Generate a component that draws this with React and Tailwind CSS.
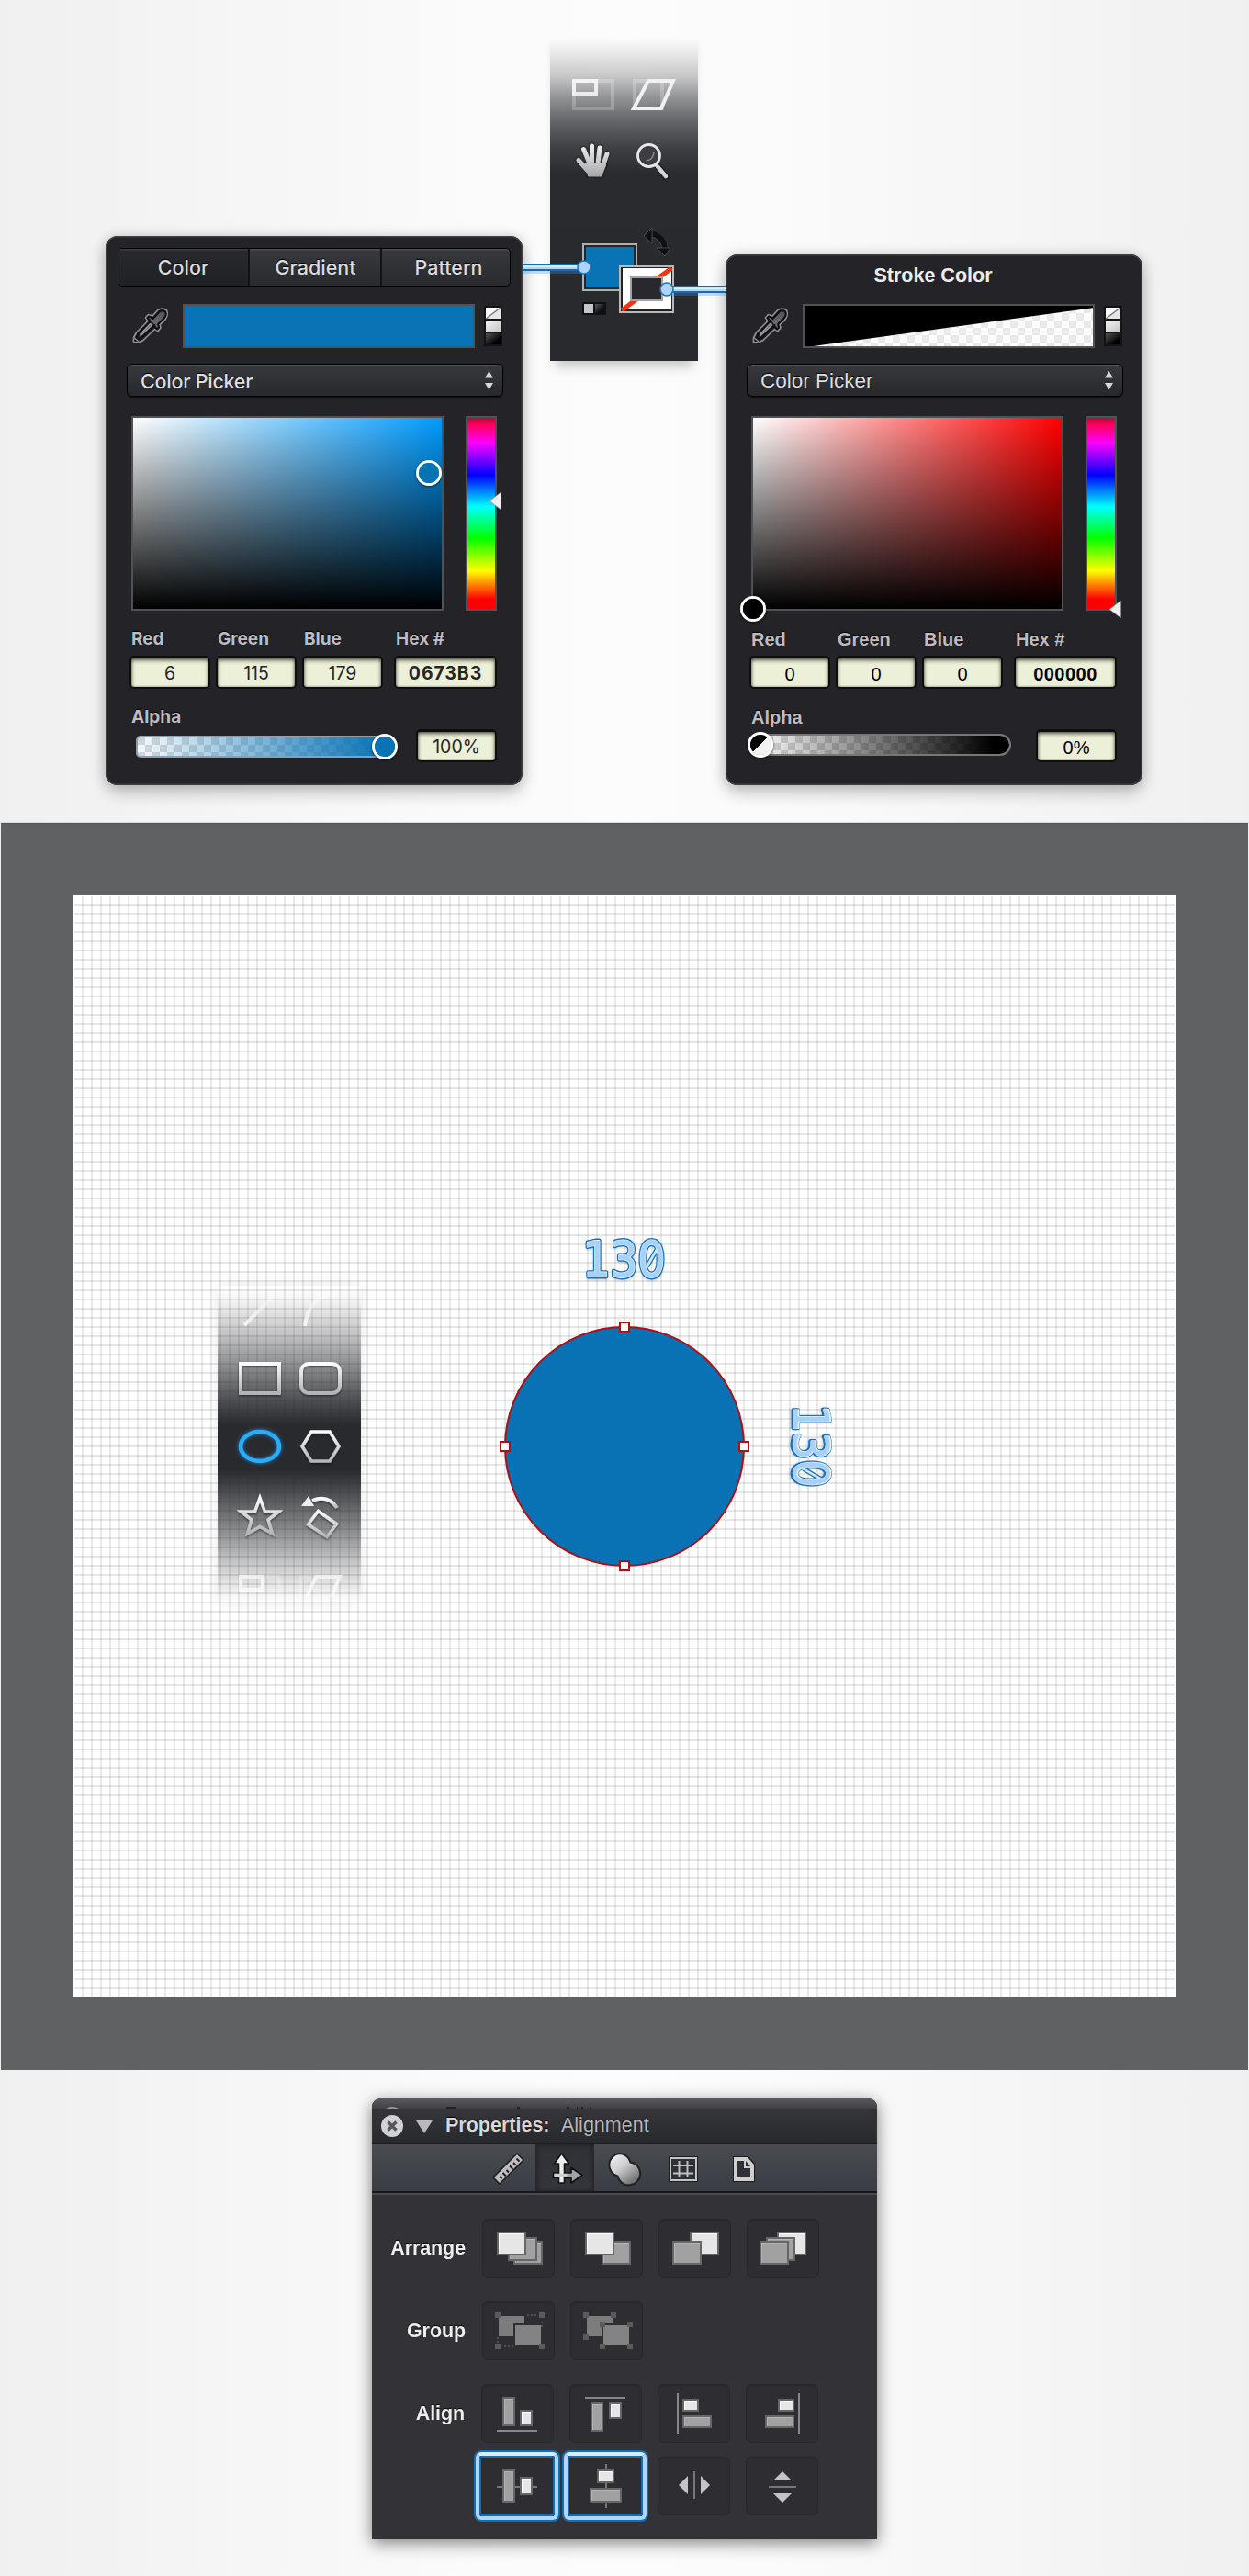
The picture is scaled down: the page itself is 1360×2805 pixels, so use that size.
import React from "react";

function Connector({ flip, reach }) {
  return (
    <svg width={reach + 11} height="24" viewBox={`0 0 ${reach + 11} 24`} className="block overflow-visible">
      <g transform={flip ? `translate(${reach + 11} 0) scale(-1 1)` : undefined}>
        <rect x="0" y="15" width={reach} height="4" fill="#3f9ae0" opacity="0.3" />
        <rect x="0" y="8" width={reach} height="8" fill="#0f6db0" />
        <rect x="0" y="10" width={reach} height="4" fill="#b5d5fb" />
        <rect x="0" y="10" width={reach} height="2" fill="#d9ecff" />
        <circle cx={reach} cy="12" r="7" fill="#b1d2fb" stroke="#1a78be" strokeWidth="1.6" />
      </g>
    </svg>
  );
}

function Eyedropper() {
  return (
    <svg width="40" height="40" viewBox="0 0 40 40" className="block">
      <defs>
        <linearGradient id="bulb" x1="0" y1="0" x2="0" y2="1">
          <stop offset="0" stopColor="#505054" />
          <stop offset="1" stopColor="#77777b" />
        </linearGradient>
      </defs>
      <g strokeLinejoin="round" strokeLinecap="round">
        <path d="M1.500 37.500V33L4.500 27 17 14.500 14.500 11 17.500 7.500 22 9 28 2.500Q33-.5 37.500 3 39.500 8 36 13L30 18.500 31 22 28 25.500 24.500 23.500 12 35.500 7 38Z" fill="#242428" stroke="#8e8e93" strokeWidth="1.700" />
        <path d="M16.500 11 18.500 9.500 22.500 12 29.500 4.500Q33 2 36 4.500 38 8 34.500 11.500L28 18 29 21.500 27 23.500Z" fill="url(#bulb)" stroke="#0f0f12" strokeWidth="2" />
        <path d="M20 15 6.500 28.500 3.500 35.500 10.500 32.500 24.500 19" fill="#2b2b2f" stroke="#0e0e11" strokeWidth="2" />
        <path d="M19.500 17.500 9 28.500V30.500L21.500 19Z" fill="#606066" stroke="#9c9ca0" strokeWidth="1.300" />
        <path d="M3 33.500 6.500 36.500" stroke="#9a9a9e" strokeWidth="1.200" />
      </g>
    </svg>
  );
}

function SwatchStack() {
  return (
    <svg width="20" height="44" viewBox="0 0 20 44" className="block">
      <defs>
        <linearGradient id="stackBlack" x1="0" y1="0" x2="1" y2="1">
          <stop offset="0" stopColor="#555" />
          <stop offset="0.75" stopColor="#000" />
        </linearGradient>
        <linearGradient id="stackWhite" x1="0" y1="0" x2="1" y2="1">
          <stop offset="0" stopColor="#f3f3f3" />
          <stop offset="1" stopColor="#c6c6c8" />
        </linearGradient>
      </defs>
      <rect x="0" y="0" width="20" height="44" fill="#141416" />
      <rect x="2" y="2" width="16" height="12" fill="#fff" />
      <path d="M2 14 18 2V14Z" fill="#e6e6e6" />
      <path d="M2 14 18 2" stroke="#777" strokeWidth="1.500" />
      <rect x="2" y="16" width="16" height="12" fill="url(#stackWhite)" />
      <rect x="2" y="30" width="16" height="12" fill="url(#stackBlack)" />
    </svg>
  );
}

function Knob({ children }) {
  return (
    <div className="h-7 w-7 overflow-hidden rounded-full border-[3px] border-white shadow-[0_1px_3px_rgba(0,0,0,.6)]">{children}</div>
  );
}

function Field({ label, value, width, bold, tone }) {
  return (
    <div>
      {label}
      <div
        className={
          "flex h-[36px] items-center justify-center rounded-[5px] border-2 border-t-[3px] border-[#0e0e0f] bg-[#ecf0d9] pt-[3px] shadow-[inset_0_2px_4px_rgba(40,40,20,.75),inset_0_0_2px_rgba(60,60,40,.6)] " +
          width + " " + tone + " " +
          (bold ? "font-bold" : "font-normal")
        }
      >
        {value}
      </div>
    </div>
  );
}

function Pointer() {
  return <svg width="13" height="19" viewBox="0 0 13 19"><path d="M0 9.500 12.500 0V19Z" fill="#f0f0f0" stroke="#888" strokeWidth=".6" /></svg>;
}

function ColorPanel({ header, font, ink, swatch, field, knobPicker, pointer, values, hex, alpha, slider, cls, sizes }) {
  const label = (t) => (
    <div className={"h-[33px] pl-[2px] pt-px font-bold leading-[28px] text-[#bcbcc2] [text-shadow:0_-1px_1px_#000] " + sizes.label}>{t}</div>
  );
  return (
    <div className={"w-[454px] rounded-[13px] bg-[#242428] shadow-[inset_0_0_0_1.5px_#404044,0_8px_18px_rgba(0,0,0,.22),0_0_14px_rgba(0,0,0,.14)] " + font + " " + cls}>
      {header}
      <div className="flex h-12">
        <div className="ml-[29px] mt-1 w-[55px]"><Eyedropper /></div>
        <div className="h-12 w-[318px] border-2 border-[#515256]">{swatch}</div>
        <div className="ml-[10px] mt-[2px]"><SwatchStack /></div>
      </div>
      <div className="ml-[23px] mt-[17px] flex h-9 w-[410px] items-center justify-between rounded-md border border-black bg-[linear-gradient(#38393d,#27282c)] pl-[14px] pr-[10px] shadow-[inset_0_1.5px_0_#505155,0_1px_1px_#101012]">
        <span className={"pt-[2px] text-[#dfdfe0] [text-shadow:0_-1px_1px_#000] " + sizes.select}>Color Picker</span>
        <svg width="9" height="22" viewBox="0 0 9 22" fill="#d6d6d8"><path d="M0 8.500 4.500 1 9 8.500ZM0 14H9L4.500 21.500Z" /></svg>
      </div>
      <div className="relative ml-[28px] mt-[21px] flex h-[212px] gap-6">
        <div className={"h-[212px] w-[340px] border-2 border-[#505155] " + field} />
        <div className="h-[212px] w-[34px] border-2 border-[#505155] bg-[linear-gradient(180deg,#c4003a_0%,#ff0062_4%,#ff00ff_13%,#0000ff_30%,#00ffff_46.5%,#00ff00_63%,#ffff00_80%,#ff0000_95%,#ff0000_100%)]" />
        {knobPicker}
        {pointer}
      </div>
      <div className={"ml-[26px] mt-[16px] flex " + sizes.value}>
        <Field label={label("Red")} value={values[0]} width="w-[88px]" tone={ink} />
        <div className="w-[6px]" />
        <Field label={label("Green")} value={values[1]} width="w-[88px]" tone={ink} />
        <div className="w-[6px]" />
        <Field label={label("Blue")} value={values[2]} width="w-[88px]" tone={ink} />
        <div className="w-[12px]" />
        <Field label={label("Hex #")} value={hex} width={"w-[112px] " + sizes.hex} bold tone={ink} />
      </div>
      <div className="ml-[26px] mt-[16px] h-[28px]">{label("Alpha")}</div>
      <div className={"relative flex h-9 " + sizes.value}>
        {slider}
        <div className="ml-auto mr-[28px]"><Field value={alpha} width="w-[88px]" tone={ink} /></div>
      </div>
    </div>
  );
}

function HandGlyph() {
  const fingers = "M630 174.500 640 186M635.500 162.500 642 178M644.500 159V178M653 161 651 178M661 167.500 656 182";
  return (
    <g strokeLinecap="round" strokeLinejoin="round">
      <path d={fingers} fill="none" stroke="#2c2c30" strokeOpacity=".8" strokeWidth="8" />
      <path d="M637 178H658L660 180 655 192H640Z" fill="#222226" stroke="#222226" strokeWidth="4" />
      <path d={fingers} fill="none" stroke="url(#handTone)" strokeWidth="5" />
      <path d="M638 178H657L659 180 654.500 191.500H641Z" fill="url(#handTone)" stroke="url(#handTone)" strokeWidth="2" />
    </g>
  );
}

function ToolStripTop() {
  return (
    <div className="h-[363px] w-[161px] bg-[linear-gradient(180deg,rgba(43,44,48,0)_3%,rgba(43,44,48,.08)_7%,rgba(43,44,48,.25)_14.5%,rgba(43,44,48,.5)_21%,rgba(43,44,48,.72)_28%,rgba(43,44,48,.9)_36%,#2a2b2f_44%,#292a2e_100%)] shadow-[0_12px_12px_-6px_rgba(0,0,0,.22)]">
      <svg width="161" height="363" viewBox="599 30 161 363" className="block">
        <defs>
          <linearGradient id="handTone" gradientUnits="userSpaceOnUse" x1="0" y1="157" x2="0" y2="193">
            <stop offset="0" stopColor="#f0f0f0" />
            <stop offset="1" stopColor="#a6a6a9" />
          </linearGradient>
          <linearGradient id="chip" x1="0" y1="0" x2="1" y2="1">
            <stop offset="0" stopColor="#5a5a5c" />
            <stop offset=".7" stopColor="#0c0c0c" />
          </linearGradient>
        </defs>
        <g fill="none">
          <rect x="625" y="88" width="42" height="30" stroke="#fff" strokeOpacity=".22" strokeWidth="4" />
          <rect x="625" y="88" width="24" height="14" stroke="#fff" strokeOpacity=".8" strokeWidth="4" />
          <rect x="691" y="88" width="30" height="30" stroke="#fff" strokeOpacity=".22" strokeWidth="4" />
          <path d="M706 88H733L720 118H690Z" stroke="#f1f1f1" strokeWidth="4" />
        </g>
        <HandGlyph />
        <g fill="none" strokeLinecap="round">
          <path d="M715 180 725 192" stroke="#19191b" strokeWidth="7" />
          <path d="M714 179 725 192" stroke="#d4d4d4" strokeWidth="4.500" />
          <circle cx="706.500" cy="169.500" r="12" fill="#3d3d42" stroke="#e8e8e8" strokeWidth="2.800" />
          <path d="M712 166Q711 174 704 175" stroke="#85858a" strokeWidth="1.600" />
        </g>
        <path d="M711 255Q723 260 724 270" fill="none" stroke="#55565a" strokeWidth="7" />
        <path d="M709 254Q723 258 724 270" fill="none" stroke="#101012" strokeWidth="6" />
        <path d="M701 257 710 248V265ZM715 270H730L724 279Z" fill="#101012" stroke="#56575b" strokeWidth=".8" />
        <rect x="635" y="266" width="58" height="50" fill="#0873b5" stroke="#aeb0b3" strokeWidth="2" />
        <rect x="637" y="268" width="54" height="46" fill="none" stroke="#25262a" strokeWidth="2" />
        <rect x="674" y="289" width="60" height="52" fill="#222226" />
        <rect x="678" y="292" width="53" height="45" fill="#fff" />
        <path d="M677 338 693 326M716 303 731.500 292" stroke="#f6330e" strokeWidth="5" />
        <rect x="675" y="290" width="58" height="50" fill="none" stroke="#b8b9bb" strokeWidth="2" />
        <rect x="687" y="302" width="34" height="25" fill="#29292d" stroke="#a2a3a6" strokeWidth="2" />
        <rect x="634" y="329" width="26" height="14" fill="#111113" />
        <rect x="636" y="331" width="10" height="10" fill="#c6c6c8" />
        <rect x="648" y="331" width="10" height="10" fill="url(#chip)" />
      </svg>
    </div>
  );
}

function ShapeStrip() {
  return (
    <div className="h-[345px] w-[156px] bg-[linear-gradient(180deg,rgba(42,43,47,0)_1%,rgba(42,43,47,.06)_5%,rgba(42,43,47,.28)_15%,rgba(42,43,47,.58)_27%,rgba(42,43,47,.85)_37%,#292a2e_44%,#292a2e_58%,rgba(42,43,47,.87)_64%,rgba(42,43,47,.6)_75%,rgba(42,43,47,.28)_87%,rgba(42,43,47,.06)_97%,rgba(42,43,47,0)_100%)] shadow-[0_0_14px_-2px_rgba(0,0,0,.12)]">
      <svg width="156" height="345" viewBox="237 1400 156 345" className="block">
        <defs>
          <linearGradient id="silver2" x1="0" y1="0" x2="0" y2="1">
            <stop offset="0" stopColor="#fafafa" />
            <stop offset="1" stopColor="#b4b4b6" />
          </linearGradient>
          <linearGradient id="fadeUp" x1="0" y1="1" x2="0" y2="0">
            <stop offset="0" stopColor="#fff" stopOpacity=".8" />
            <stop offset="1" stopColor="#fff" stopOpacity=".2" />
          </linearGradient>
          <filter id="lift" x="-20%" y="-20%" width="140%" height="150%">
            <feDropShadow dx="0" dy="1.500" stdDeviation="1" floodColor="#000" floodOpacity=".5" />
          </filter>
          <filter id="blueGlow" x="-30%" y="-30%" width="160%" height="160%">
            <feDropShadow dx="0" dy="0" stdDeviation="2" floodColor="#159bff" floodOpacity=".8" />
          </filter>
        </defs>
        <g fill="none" stroke="url(#silver2)" strokeWidth="4">
          <g stroke="url(#fadeUp)"><path d="M266 1443 298 1411M332 1444Q336 1410 367 1409" /></g>
          <rect x="262" y="1485" width="42" height="32" filter="url(#lift)" />
          <rect x="328" y="1485" width="42" height="32" rx="8" filter="url(#lift)" />
          <ellipse cx="283" cy="1575" rx="21" ry="16" stroke="#2bacf8" strokeWidth="4.500" filter="url(#blueGlow)" />
          <path d="M339 1559H359L369 1575 359 1591H339L329 1575Z" strokeWidth="3.500" filter="url(#lift)" />
          <path d="M283 1631 288.500 1646H303.500L292 1655 296.500 1670 283 1662.500 269.500 1670 274 1655 262.500 1646H277.500Z" strokeWidth="3.500" filter="url(#lift)" />
          <path d="M346.500 1645.500 366.500 1659.500 356 1673.500 335.500 1660Z" strokeWidth="3.500" filter="url(#lift)" />
          <path d="M367 1642Q357 1627 340 1634" strokeWidth="4" filter="url(#lift)" />
          <g stroke="#fff" strokeOpacity=".65">
            <rect x="262" y="1717" width="24" height="14" />
            <path d="M334 1739 344 1717H370L361 1739" />
          </g>
          <path d="M289 1717H304V1738M328 1740V1717H340" stroke="#fff" strokeOpacity=".18" />
        </g>
        <path d="M328 1640 336 1629 342 1640Z" fill="#eee" />
      </svg>
    </div>
  );
}

function Dimension({ turned }) {
  const text = { x: "43.5", textAnchor: "middle", fontSize: "53", textLength: "90", lengthAdjust: "spacingAndGlyphs", strokeLinejoin: "round" };
  const slash = "M68.500 35 79 17";
  return (
    <svg width="88" height="52" viewBox="0 0 88 52" className={"block overflow-visible font-['DejaVu_Sans',sans-serif] " + (turned ? "rotate-90" : "")}>
      <path d={slash} stroke="#1673bd" strokeWidth="5.200" />
      <text {...text} y="45.500" fill="#1673bd" stroke="#1673bd" strokeWidth="4.800" className="[filter:drop-shadow(0_2px_1px_rgba(0,0,0,.12))]">130</text>
      <path d={slash} stroke="#d5e9fd" strokeWidth="2.600" strokeLinecap="square" />
      <text {...text} y="45.500" fill="#e6f3ff" stroke="#e6f3ff" strokeWidth="1.900">130</text>
      <text {...text} y="46" fill="#a9d0f8" stroke="#a9d0f8" strokeWidth=".4">130</text>
    </svg>
  );
}

function Canvas() {
  return (
    <div className="relative mx-px h-[1358px] border-t border-[#55565a] bg-[#606163] pl-[79px] pt-[78px]">
      <div className="h-[1200px] w-[1200px] bg-white p-px">
        <div className="relative h-[1198px] w-[1198px] bg-[linear-gradient(90deg,transparent_8px,rgba(0,0,0,.085)_8px),linear-gradient(180deg,transparent_8px,rgba(0,0,0,.095)_8px)] bg-[length:10px_10px]">
          <div className="absolute left-[156px] top-[424px]"><ShapeStrip /></div>
          <div className="absolute left-[555px] top-[368px]"><Dimension /></div>
          <div className="absolute left-[759px] top-[573px]"><Dimension turned /></div>
          <div className="absolute left-[461px] top-[461px]">
            <svg width="276" height="276" viewBox="0 0 276 276" className="block">
              <circle cx="138" cy="138" r="130" fill="#0872b4" stroke="#ad1015" strokeWidth="2" />
              <g fill="#fff" stroke="#ad1015" strokeWidth="2">
                <rect x="133" y="3" width="10" height="10" />
                <rect x="133" y="263" width="10" height="10" />
                <rect x="3" y="133" width="10" height="10" />
                <rect x="263" y="133" width="10" height="10" />
              </g>
            </svg>
          </div>
        </div>
      </div>
    </div>
  );
}

const Box = ({ x, y, w = 32, h = 26, light }) => (
  <g>
    <rect x={x + 1} y={y + 1} width={w - 2} height={h - 2} fill={light ? "#e6e6e6" : "#a1a1a2"} stroke="#666668" strokeWidth="2" />
    <path d={`M${x + 2.5} ${y + h - 2}V${y + 2.5}H${x + w - 2}`} fill="none" stroke={light ? "#fff" : "#b4b4b5"} />
  </g>
);
const Dots = ({ pts }) => pts.map(([x, y]) => <rect key={x + "-" + y} x={x - 3} y={y - 3} width="6" height="6" fill="#5a5a5c" />);

function IconButton({ children, active }) {
  return (
    <div className="relative h-16 w-[79px] rounded-md border border-[#28282b] bg-[#2e2e32] shadow-[inset_0_1px_1px_#29292c]">
      <svg width="79" height="64" viewBox="0 0 79 64" className="-ml-px -mt-px block">{children}</svg>
      {active && (
        <div className="absolute -left-[9px] -top-[8px] h-[78px] w-[94px] rounded-lg border-2 border-[#1170b5]">
          <div className="h-full w-full rounded-md border-4 border-[#b3d5fb] border-t-[#d7ecff]">
            <div className="h-full w-full rounded-sm border-2 border-[#1170b5]" />
          </div>
        </div>
      )}
    </div>
  );
}

function Row({ label, children, className }) {
  return (
    <div className={"flex h-16 " + className}>
      <div className="mr-[18px] w-[102px] whitespace-nowrap pt-[14px] text-right text-[21.500px] font-bold leading-[36px] tracking-[-.1px] text-[#eeeeef] [text-shadow:0_-1px_1px_#000]">{label}</div>
      <div className="flex gap-[17px]">{children}</div>
    </div>
  );
}

function PropertiesPanel() {
  return (
    <div className="ml-[405px] h-[480px] w-[550px] overflow-hidden rounded-t-[9px] bg-[#333337] font-['Liberation_Sans',Arial,sans-serif]">
      <div className="h-[11px] bg-[linear-gradient(#5b5b5f,#414145)] pt-2">
        <svg width="300" height="3" viewBox="0 0 300 3" className="block">
          <path d="M15 3Q22-1 29 3Z" fill="#98989b" />
          <path d="M81 2H91M158 2H161M212 2H215M223 2H224M228 2H230M237 2H239" stroke="#222" strokeWidth="2" />
        </svg>
      </div>
      <div className="mx-px flex h-[38px] items-center rounded-t-[9px] border-t border-[#2b2b2f] bg-[linear-gradient(#35353a,#28292d)]">
        <svg width="24" height="24" viewBox="0 0 24 24" className="-mt-px ml-[9px]">
          <circle cx="12" cy="12" r="12" fill="#d2d2d3" />
          <path d="M7.500 7.500 16.500 16.500M16.500 7.500 7.500 16.500" stroke="#55565a" strokeWidth="3.400" />
        </svg>
        <svg width="18" height="14" viewBox="0 0 18 14" className="ml-[14px]"><path d="M0 0H18L9 14Z" fill="#b9b9bb" /></svg>
        <span className="-mt-[3px] ml-[14px] w-[126px] text-[21.500px] font-bold text-[#d8d8da] [text-shadow:0_-1px_1px_#000]">Properties:</span>
        <span className="-mt-[2px] text-[21.500px] text-[#b8b8bb] [text-shadow:0_-1px_1px_#000]">Alignment</span>
      </div>
      <div className="h-[54px] border-b-2 border-t-[1.500px] border-b-[#18191c] border-t-[#1c1d20] bg-[linear-gradient(#4a4c51,#42454a_40%,#3a3d44)]">
        <div className="ml-[114px] flex h-full">
          <svg width="64" height="52" viewBox="519 2335 64 52">
            <path d="M537 2371 563 2345 570 2352 544 2378Z" fill="#bdbdbf" stroke="#1b1b1e" strokeWidth="1.500" />
            <path d="M544 2370 546.500 2372.500M547.500 2366 551 2369.500M551.500 2363 554 2365.500M555 2358.500 558.500 2362M559 2355 561.500 2357.500M562.500 2350.500 565.500 2353.500" stroke="#1b1b1e" strokeWidth="1.800" />
          </svg>
          <div className="h-full w-16 bg-[linear-gradient(#303135,#34363b)] shadow-[inset_3px_0_4px_#26272a,inset_-3px_0_4px_#26272a]">
            <svg width="64" height="52" viewBox="583 2335 64 52">
              <g stroke="#101012" strokeWidth="1.600" strokeLinejoin="round">
                <path d="M602.500 2366H622V2360.500L634 2368.500 622 2377V2371.500H602.500Z" fill="#a3a3a5" />
                <path d="M608.500 2377V2356H603.500L611.500 2345 619.500 2356H614.500V2377Z" fill="#ededee" />
              </g>
              <rect x="603.500" y="2366.800" width="14" height="4" fill="#cfcfd0" />
            </svg>
          </div>
          <svg width="68" height="52" viewBox="647 2335 68 52">
            <defs><linearGradient id="blend" x1="0" y1="0" x2=".8" y2="1"><stop offset="0" stopColor="#f6f6f6" /><stop offset=".45" stopColor="#cfcfd0" /><stop offset=".9" stopColor="#77777a" /></linearGradient></defs>
            <path d="M674.500 2345A12.500 12.500 0 0 1 686.500 2354.500A12.500 12.500 0 1 1 672.500 2369.500A12.500 12.500 0 0 1 674.500 2345Z" fill="url(#blend)" stroke="#202124" strokeWidth="2" />
          </svg>
          <svg width="64" height="52" viewBox="715 2335 64 52" fill="none">
            <rect x="728" y="2348" width="32" height="28" fill="#1c1d20" />
            <rect x="730" y="2350" width="28" height="24" fill="#2e3035" stroke="#c4c4c6" strokeWidth="2" />
            <path d="M739.500 2353V2371M748.500 2353V2371M733 2358H755M733 2366.500H755" stroke="#c0c0c3" strokeWidth="2" />
          </svg>
          <svg width="64" height="52" viewBox="779 2335 64 52">
            <path d="M798 2348H815L822 2356V2376H798Z" fill="#1b1c1f" />
            <path d="M799 2349H814L821 2357V2375H799Z" fill="#cfcfd0" />
            <path d="M803 2353H810V2361H817V2371H803Z" fill="#303136" />
            <path d="M812 2353 817 2359H812Z" fill="#303136" />
          </svg>
        </div>
      </div>
      <div className="h-[2px] bg-[#4b4b4f]" />
      <Row label="Arrange" className="mt-[26px]">
        <IconButton><Box x={34} y={24} /><Box x={28} y={20} /><Box x={16} y={14} light /></IconButton>
        <IconButton><Box x={34} y={24} /><Box x={16} y={14} light /></IconButton>
        <IconButton><Box x={34} y={14} light /><Box x={15} y={24} /></IconButton>
        <IconButton><Box x={33} y={14} light /><Box x={21} y={20} /><Box x={14} y={24} /></IconButton>
      </Row>
      <Row label="Group" className="mt-[26px]">
        <IconButton>
          <path d="M49 15H60M65 22V30M17 39V46M24 49H35" stroke="#5c5c5e" strokeWidth="1.500" strokeDasharray="2 2" />
          <path d="M18 16H46V24H34V38H18Z" fill="#7c7c7d" />
          <rect x="36" y="26" width="28" height="22" fill="#838384" />
          <Dots pts={[[17, 15], [65, 15], [17, 49], [65, 49]]} />
        </IconButton>
        <IconButton>
          <path d="M18 16H46V24H34V38H18Z" fill="#7c7c7d" />
          <rect x="36" y="26" width="28" height="22" fill="#838384" />
          <Dots pts={[[17, 15], [47, 15], [17, 39], [35, 25], [65, 25], [35, 49], [65, 49]]} />
        </IconButton>
      </Row>
      <Row label="Align" className="-ml-px mt-[26px]">
        <IconButton><path d="M17 51H61" stroke="#87878a" strokeWidth="2" /><Box x={23} y={14} w={14} h={32} /><Box x={42} y={28} w={14} h={18} light /></IconButton>
        <IconButton><path d="M17 15H61" stroke="#87878a" strokeWidth="2" /><Box x={23} y={20} w={14} h={32} /><Box x={43} y={20} w={14} h={18} light /></IconButton>
        <IconButton><path d="M22 10V54" stroke="#87878a" strokeWidth="2" /><Box x={27} y={16} w={18} h={14} light /><Box x={27} y={34} w={32} h={14} /></IconButton>
        <IconButton><path d="M58 10V54" stroke="#87878a" strokeWidth="2" /><Box x={35} y={16} w={18} h={14} light /><Box x={21} y={34} w={32} h={14} /></IconButton>
      </Row>
      <Row label="" className="-ml-px mt-[15px]">
        <IconButton active><path d="M17 33H61" stroke="#77777a" strokeWidth="2" /><Box x={23} y={14} w={14} h={36} /><Box x={42} y={22} w={14} h={20} light /></IconButton>
        <IconButton active><path d="M40 8V56" stroke="#77777a" strokeWidth="2" /><Box x={30} y={14} w={19} h={15} light /><Box x={22} y={34} w={35} h={16} /></IconButton>
        <IconButton><path d="M40 16V46" stroke="#77777a" strokeWidth="2" /><path d="M23 31 33 21V41ZM57 31 47 21V41Z" fill="#c4c4c6" /></IconButton>
        <IconButton><path d="M25 33H55" stroke="#77777a" strokeWidth="2" /><path d="M40 16 50 26H30ZM40 50 50 40H30Z" fill="#c4c4c6" /></IconButton>
      </Row>
    </div>
  );
}

const tab = "flex items-center justify-center text-[21.500px] font-medium text-[#dcdcde] [text-shadow:0_-1px_1px_#000]";

export default function App() {
  return (
    <div className="h-[2805px] w-[1360px] overflow-hidden bg-[linear-gradient(90deg,#f0f0f0,#fafafa_35%,#fcfcfc_50%,#fafafa_65%,#f0f0f0)]">
      <div className="relative flex h-[895px] items-start pl-[115px]">
        <ColorPanel
          cls="mt-[257px] h-[598px]"
          font="font-['Inter',sans-serif]"
          ink="text-[#25261f]"
          sizes={{ label: "text-[19px]", select: "text-[21.500px] font-medium tracking-[-.25px]", value: "text-[19.500px]", hex: "tracking-[.9px]" }}
          header={
            <div className="mx-[13px] mb-[19px] pt-[13px]">
              <div className="flex h-[42px] overflow-hidden rounded-[5px] border-[1.500px] border-black bg-[linear-gradient(#38393d,#292a2e)] shadow-[inset_0_1.500px_0_#4e4f53]">
                <div className={tab + " w-[141px] bg-[linear-gradient(#292a2e,#202125)] shadow-[inset_0_1.500px_0_#3c3d40]"}>Color</div>
                <div className={tab + " w-[146px] border-x-2 border-[#131316] pl-px"}>Gradient</div>
                <div className={tab + " flex-1 pl-[6px]"}>Pattern</div>
              </div>
            </div>
          }
          swatch={<div className="h-full bg-[#0873b5]" />}
          field="bg-[linear-gradient(0deg,#000,transparent),linear-gradient(90deg,#fff,#009bff)]"
          knobPicker={<div className="absolute left-[310px] top-[48px]"><Knob><div className="h-full bg-[#0673b3]" /></Knob></div>}
          pointer={<div className="absolute left-[390px] top-[83px]"><Pointer /></div>}
          values={["6", "115", "179"]}
          hex="0673B3"
          alpha="100%"
          slider={
            <>
              <div className="ml-[33px] mt-[7px] h-6 w-[272px] overflow-hidden rounded-[5px] border-2 border-[#8b9fb2] bg-[conic-gradient(#fff_25%,#dcdcdc_0_50%,#fff_0_75%,#dcdcdc_0)] bg-[length:16px_16px]">
                <div className="h-full bg-[linear-gradient(90deg,rgba(8,115,181,.04),#0873b5)]" />
              </div>
              <div className="absolute left-[290px] top-[5px]"><Knob><div className="h-full bg-[#0873b5]" /></Knob></div>
            </>
          }
        />
        <div className="ml-[30px] mt-[30px]"><ToolStripTop /></div>
        <ColorPanel
          cls="ml-[30px] mt-[277px] h-[578px]"
          font="font-['Liberation_Sans',Arial,sans-serif]"
          ink="text-black"
          sizes={{ label: "text-[20px]", select: "text-[22.500px]", value: "text-[20px]", hex: "tracking-[.5px]" }}
          header={<div className="h-[54px] pr-[2px] pt-[8px] text-center text-[21.500px] font-bold leading-[30px] text-[#ececee]">Stroke Color</div>}
          swatch={
            <div className="h-full bg-[conic-gradient(#fff_25%,#e9e9e9_0_50%,#fff_0_75%,#e9e9e9_0)] bg-[length:16px_16px]">
              <div className="h-full bg-black [clip-path:polygon(0_0,100%_0,100%_5%,3%_100%,0_100%)]" />
            </div>
          }
          field="bg-[linear-gradient(0deg,#000,transparent),linear-gradient(90deg,#fff,#f00)]"
          knobPicker={<div className="absolute left-[-12px] top-[196px]"><Knob><div className="h-full bg-black" /></Knob></div>}
          pointer={<div className="absolute left-[390px] top-[201px]"><Pointer /></div>}
          values={["0", "0", "0"]}
          hex="000000"
          alpha="0%"
          slider={
            <>
              <div className="ml-[26px] mt-[5px] h-6 w-[285px] overflow-hidden rounded-full border-2 border-[#77777a] bg-[conic-gradient(#fff_25%,#dcdcdc_0_50%,#fff_0_75%,#dcdcdc_0)] bg-[length:16px_16px]">
                <div className="h-full bg-[linear-gradient(90deg,rgba(0,0,0,0),#000_94%)]" />
              </div>
              <div className="absolute left-[24px] top-[3px]"><Knob><div className="h-full bg-[linear-gradient(135deg,#000_49%,#f2f2f2_50%)]" /></Knob></div>
            </>
          }
        />
        <div className="absolute left-[569px] top-[279px]"><Connector reach={67} /></div>
        <div className="absolute left-[715px] top-[303px]"><Connector reach={64} flip /></div>
      </div>
      <div className="h-px bg-[#dcdcdc]" />
      <Canvas />
      <div className="pt-[31px]">
        <div className="drop-shadow-[0_4px_9px_rgba(0,0,0,.5)]"><PropertiesPanel /></div>
      </div>
    </div>
  );
}
